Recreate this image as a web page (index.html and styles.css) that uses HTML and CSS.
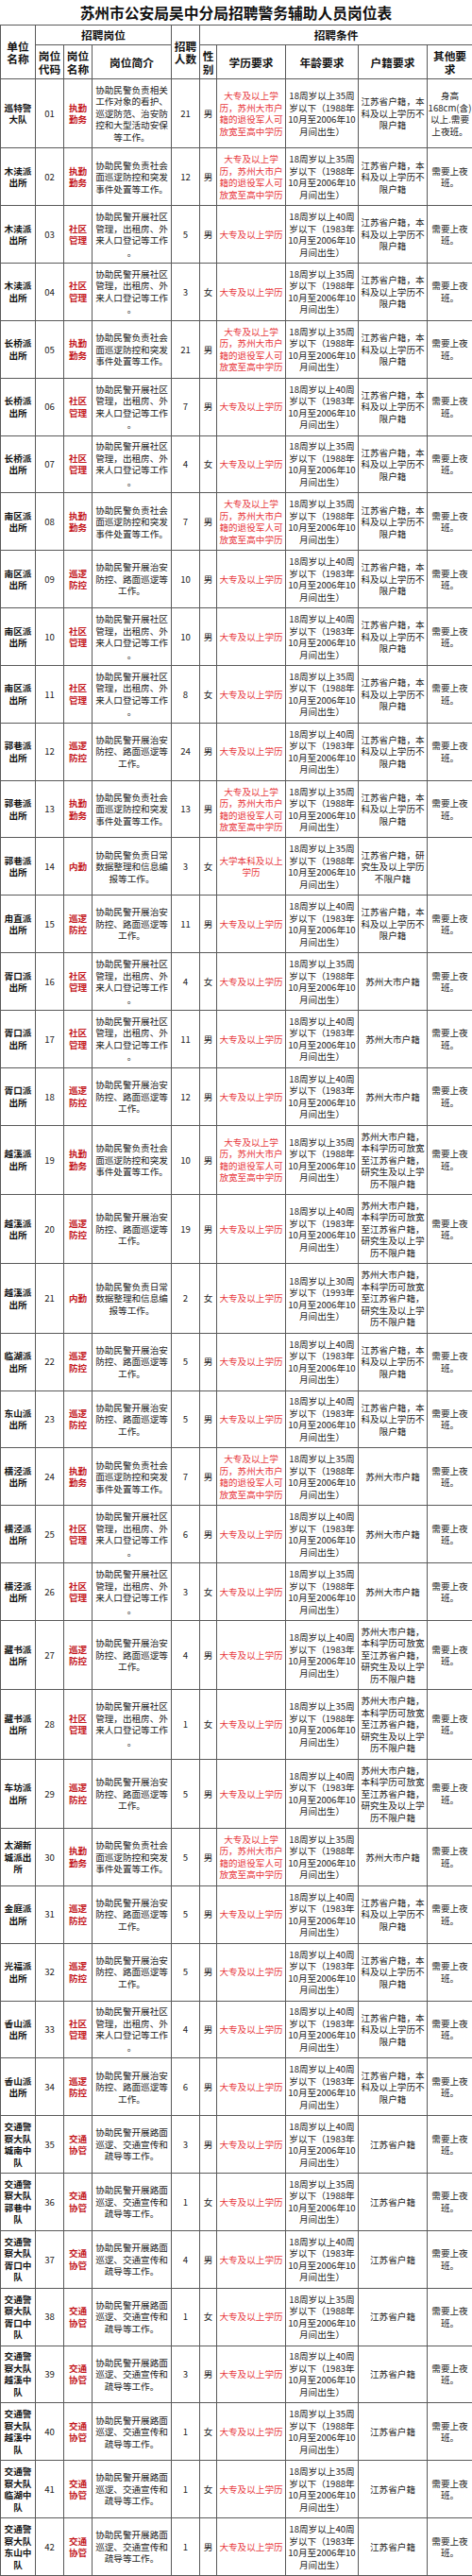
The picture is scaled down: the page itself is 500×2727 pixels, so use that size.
FILE: index.html
```
<!DOCTYPE html>
<html lang="zh-CN">
<head>
<meta charset="utf-8">
<title>苏州市公安局吴中分局招聘警务辅助人员岗位表</title>
<link rel="stylesheet" href="styles.css">
</head>
<body>
<div class="page">
<div class="title">苏州市公安局吴中分局招聘警务辅助人员岗位表</div>
<table class="jobs">
<colgroup>
<col class="c-unit"><col class="c-code"><col class="c-name"><col class="c-desc"><col class="c-num"><col class="c-sex"><col class="c-edu"><col class="c-age"><col class="c-hj"><col class="c-other">
</colgroup>
<thead>
<tr class="hr1">
<th rowspan="2">单位<br>名称</th>
<th colspan="3">招聘岗位</th>
<th rowspan="2">招聘<br>人数</th>
<th colspan="5">招聘条件</th>
</tr>
<tr class="hr2">
<th>岗位<br>代码</th><th>岗位<br>名称</th><th>岗位简介</th>
<th>性<br>别</th><th>学历要求</th><th>年龄要求</th><th>户籍要求</th><th>其他要<br>求</th>
</tr>
</thead>
<tbody>
<tr><td class="unit">巡特警<br>大队</td><td>01</td><td class="pos">执勤<br>勤务</td><td>协助民警负责相关<br>工作对象的看护、<br>巡逻防范、治安防<br>控和大型活动安保<br>等工作。</td><td>21</td><td>男</td><td class="edu">大专及以上学<br>历，苏州大市户<br>籍的退役军人可<br>放宽至高中学历</td><td>18周岁以上35周<br>岁以下（1988年<br>10月至2006年10<br>月间出生）</td><td>江苏省户籍，本<br>科及以上学历不<br>限户籍</td><td>身高<br>168cm(含)<br>以上.需要<br>上夜班。</td></tr>
<tr><td class="unit">木渎派<br>出所</td><td>02</td><td class="pos">执勤<br>勤务</td><td>协助民警负责社会<br>面巡逻防控和突发<br>事件处置等工作。</td><td>12</td><td>男</td><td class="edu">大专及以上学<br>历，苏州大市户<br>籍的退役军人可<br>放宽至高中学历</td><td>18周岁以上35周<br>岁以下（1988年<br>10月至2006年10<br>月间出生）</td><td>江苏省户籍，本<br>科及以上学历不<br>限户籍</td><td>需要上夜<br>班。</td></tr>
<tr><td class="unit">木渎派<br>出所</td><td>03</td><td class="pos">社区<br>管理</td><td>协助民警开展社区<br>管理，出租房、外<br>来人口登记等工作<br>。</td><td>5</td><td>男</td><td class="edu">大专及以上学历</td><td>18周岁以上40周<br>岁以下（1983年<br>10月至2006年10<br>月间出生）</td><td>江苏省户籍，本<br>科及以上学历不<br>限户籍</td><td>需要上夜<br>班。</td></tr>
<tr><td class="unit">木渎派<br>出所</td><td>04</td><td class="pos">社区<br>管理</td><td>协助民警开展社区<br>管理，出租房、外<br>来人口登记等工作<br>。</td><td>3</td><td>女</td><td class="edu">大专及以上学历</td><td>18周岁以上35周<br>岁以下（1988年<br>10月至2006年10<br>月间出生）</td><td>江苏省户籍，本<br>科及以上学历不<br>限户籍</td><td>需要上夜<br>班。</td></tr>
<tr><td class="unit">长桥派<br>出所</td><td>05</td><td class="pos">执勤<br>勤务</td><td>协助民警负责社会<br>面巡逻防控和突发<br>事件处置等工作。</td><td>21</td><td>男</td><td class="edu">大专及以上学<br>历，苏州大市户<br>籍的退役军人可<br>放宽至高中学历</td><td>18周岁以上35周<br>岁以下（1988年<br>10月至2006年10<br>月间出生）</td><td>江苏省户籍，本<br>科及以上学历不<br>限户籍</td><td>需要上夜<br>班。</td></tr>
<tr><td class="unit">长桥派<br>出所</td><td>06</td><td class="pos">社区<br>管理</td><td>协助民警开展社区<br>管理，出租房、外<br>来人口登记等工作<br>。</td><td>7</td><td>男</td><td class="edu">大专及以上学历</td><td>18周岁以上40周<br>岁以下（1983年<br>10月至2006年10<br>月间出生）</td><td>江苏省户籍，本<br>科及以上学历不<br>限户籍</td><td>需要上夜<br>班。</td></tr>
<tr><td class="unit">长桥派<br>出所</td><td>07</td><td class="pos">社区<br>管理</td><td>协助民警开展社区<br>管理，出租房、外<br>来人口登记等工作<br>。</td><td>4</td><td>女</td><td class="edu">大专及以上学历</td><td>18周岁以上35周<br>岁以下（1988年<br>10月至2006年10<br>月间出生）</td><td>江苏省户籍，本<br>科及以上学历不<br>限户籍</td><td>需要上夜<br>班。</td></tr>
<tr><td class="unit">南区派<br>出所</td><td>08</td><td class="pos">执勤<br>勤务</td><td>协助民警负责社会<br>面巡逻防控和突发<br>事件处置等工作。</td><td>7</td><td>男</td><td class="edu">大专及以上学<br>历，苏州大市户<br>籍的退役军人可<br>放宽至高中学历</td><td>18周岁以上35周<br>岁以下（1988年<br>10月至2006年10<br>月间出生）</td><td>江苏省户籍，本<br>科及以上学历不<br>限户籍</td><td>需要上夜<br>班。</td></tr>
<tr><td class="unit">南区派<br>出所</td><td>09</td><td class="pos">巡逻<br>防控</td><td>协助民警开展治安<br>防控、路面巡逻等<br>工作。</td><td>10</td><td>男</td><td class="edu">大专及以上学历</td><td>18周岁以上40周<br>岁以下（1983年<br>10月至2006年10<br>月间出生）</td><td>江苏省户籍，本<br>科及以上学历不<br>限户籍</td><td>需要上夜<br>班。</td></tr>
<tr><td class="unit">南区派<br>出所</td><td>10</td><td class="pos">社区<br>管理</td><td>协助民警开展社区<br>管理，出租房、外<br>来人口登记等工作<br>。</td><td>10</td><td>男</td><td class="edu">大专及以上学历</td><td>18周岁以上40周<br>岁以下（1983年<br>10月至2006年10<br>月间出生）</td><td>江苏省户籍，本<br>科及以上学历不<br>限户籍</td><td>需要上夜<br>班。</td></tr>
<tr><td class="unit">南区派<br>出所</td><td>11</td><td class="pos">社区<br>管理</td><td>协助民警开展社区<br>管理，出租房、外<br>来人口登记等工作<br>。</td><td>8</td><td>女</td><td class="edu">大专及以上学历</td><td>18周岁以上35周<br>岁以下（1988年<br>10月至2006年10<br>月间出生）</td><td>江苏省户籍，本<br>科及以上学历不<br>限户籍</td><td>需要上夜<br>班。</td></tr>
<tr><td class="unit">郭巷派<br>出所</td><td>12</td><td class="pos">巡逻<br>防控</td><td>协助民警开展治安<br>防控、路面巡逻等<br>工作。</td><td>24</td><td>男</td><td class="edu">大专及以上学历</td><td>18周岁以上40周<br>岁以下（1983年<br>10月至2006年10<br>月间出生）</td><td>江苏省户籍，本<br>科及以上学历不<br>限户籍</td><td>需要上夜<br>班。</td></tr>
<tr><td class="unit">郭巷派<br>出所</td><td>13</td><td class="pos">执勤<br>勤务</td><td>协助民警负责社会<br>面巡逻防控和突发<br>事件处置等工作。</td><td>13</td><td>男</td><td class="edu">大专及以上学<br>历，苏州大市户<br>籍的退役军人可<br>放宽至高中学历</td><td>18周岁以上35周<br>岁以下（1988年<br>10月至2006年10<br>月间出生）</td><td>江苏省户籍，本<br>科及以上学历不<br>限户籍</td><td>需要上夜<br>班。</td></tr>
<tr><td class="unit">郭巷派<br>出所</td><td>14</td><td class="pos">内勤</td><td>协助民警负责日常<br>数据整理和信息编<br>报等工作。</td><td>3</td><td>女</td><td class="edu">大学本科及以上<br>学历</td><td>18周岁以上35周<br>岁以下（1988年<br>10月至2006年10<br>月间出生）</td><td>江苏省户籍，研<br>究生及以上学历<br>不限户籍</td><td></td></tr>
<tr><td class="unit">甪直派<br>出所</td><td>15</td><td class="pos">巡逻<br>防控</td><td>协助民警开展治安<br>防控、路面巡逻等<br>工作。</td><td>11</td><td>男</td><td class="edu">大专及以上学历</td><td>18周岁以上40周<br>岁以下（1983年<br>10月至2006年10<br>月间出生）</td><td>江苏省户籍，本<br>科及以上学历不<br>限户籍</td><td>需要上夜<br>班。</td></tr>
<tr><td class="unit">胥口派<br>出所</td><td>16</td><td class="pos">社区<br>管理</td><td>协助民警开展社区<br>管理，出租房、外<br>来人口登记等工作<br>。</td><td>4</td><td>女</td><td class="edu">大专及以上学历</td><td>18周岁以上35周<br>岁以下（1988年<br>10月至2006年10<br>月间出生）</td><td>苏州大市户籍</td><td>需要上夜<br>班。</td></tr>
<tr><td class="unit">胥口派<br>出所</td><td>17</td><td class="pos">社区<br>管理</td><td>协助民警开展社区<br>管理，出租房、外<br>来人口登记等工作<br>。</td><td>11</td><td>男</td><td class="edu">大专及以上学历</td><td>18周岁以上40周<br>岁以下（1983年<br>10月至2006年10<br>月间出生）</td><td>苏州大市户籍</td><td>需要上夜<br>班。</td></tr>
<tr><td class="unit">胥口派<br>出所</td><td>18</td><td class="pos">巡逻<br>防控</td><td>协助民警开展治安<br>防控、路面巡逻等<br>工作。</td><td>12</td><td>男</td><td class="edu">大专及以上学历</td><td>18周岁以上40周<br>岁以下（1983年<br>10月至2006年10<br>月间出生）</td><td>苏州大市户籍</td><td>需要上夜<br>班。</td></tr>
<tr><td class="unit">越溪派<br>出所</td><td>19</td><td class="pos">执勤<br>勤务</td><td>协助民警负责社会<br>面巡逻防控和突发<br>事件处置等工作。</td><td>10</td><td>男</td><td class="edu">大专及以上学<br>历，苏州大市户<br>籍的退役军人可<br>放宽至高中学历</td><td>18周岁以上35周<br>岁以下（1988年<br>10月至2006年10<br>月间出生）</td><td>苏州大市户籍，<br>本科学历可放宽<br>至江苏省户籍，<br>研究生及以上学<br>历不限户籍</td><td>需要上夜<br>班。</td></tr>
<tr><td class="unit">越溪派<br>出所</td><td>20</td><td class="pos">巡逻<br>防控</td><td>协助民警开展治安<br>防控、路面巡逻等<br>工作。</td><td>19</td><td>男</td><td class="edu">大专及以上学历</td><td>18周岁以上40周<br>岁以下（1983年<br>10月至2006年10<br>月间出生）</td><td>苏州大市户籍，<br>本科学历可放宽<br>至江苏省户籍，<br>研究生及以上学<br>历不限户籍</td><td>需要上夜<br>班。</td></tr>
<tr><td class="unit">越溪派<br>出所</td><td>21</td><td class="pos">内勤</td><td>协助民警负责日常<br>数据整理和信息编<br>报等工作。</td><td>2</td><td>女</td><td class="edu">大专及以上学历</td><td>18周岁以上30周<br>岁以下（1993年<br>10月至2006年10<br>月间出生）</td><td>苏州大市户籍，<br>本科学历可放宽<br>至江苏省户籍，<br>研究生及以上学<br>历不限户籍</td><td></td></tr>
<tr><td class="unit">临湖派<br>出所</td><td>22</td><td class="pos">巡逻<br>防控</td><td>协助民警开展治安<br>防控、路面巡逻等<br>工作。</td><td>5</td><td>男</td><td class="edu">大专及以上学历</td><td>18周岁以上40周<br>岁以下（1983年<br>10月至2006年10<br>月间出生）</td><td>江苏省户籍，本<br>科及以上学历不<br>限户籍</td><td>需要上夜<br>班。</td></tr>
<tr><td class="unit">东山派<br>出所</td><td>23</td><td class="pos">巡逻<br>防控</td><td>协助民警开展治安<br>防控、路面巡逻等<br>工作。</td><td>5</td><td>男</td><td class="edu">大专及以上学历</td><td>18周岁以上40周<br>岁以下（1983年<br>10月至2006年10<br>月间出生）</td><td>江苏省户籍，本<br>科及以上学历不<br>限户籍</td><td>需要上夜<br>班。</td></tr>
<tr><td class="unit">横泾派<br>出所</td><td>24</td><td class="pos">执勤<br>勤务</td><td>协助民警负责社会<br>面巡逻防控和突发<br>事件处置等工作。</td><td>7</td><td>男</td><td class="edu">大专及以上学<br>历，苏州大市户<br>籍的退役军人可<br>放宽至高中学历</td><td>18周岁以上35周<br>岁以下（1988年<br>10月至2006年10<br>月间出生）</td><td>苏州大市户籍</td><td>需要上夜<br>班。</td></tr>
<tr><td class="unit">横泾派<br>出所</td><td>25</td><td class="pos">社区<br>管理</td><td>协助民警开展社区<br>管理，出租房、外<br>来人口登记等工作<br>。</td><td>6</td><td>男</td><td class="edu">大专及以上学历</td><td>18周岁以上40周<br>岁以下（1983年<br>10月至2006年10<br>月间出生）</td><td>苏州大市户籍</td><td>需要上夜<br>班。</td></tr>
<tr><td class="unit">横泾派<br>出所</td><td>26</td><td class="pos">社区<br>管理</td><td>协助民警开展社区<br>管理，出租房、外<br>来人口登记等工作<br>。</td><td>3</td><td>女</td><td class="edu">大专及以上学历</td><td>18周岁以上35周<br>岁以下（1988年<br>10月至2006年10<br>月间出生）</td><td>苏州大市户籍</td><td>需要上夜<br>班。</td></tr>
<tr><td class="unit">藏书派<br>出所</td><td>27</td><td class="pos">巡逻<br>防控</td><td>协助民警开展治安<br>防控、路面巡逻等<br>工作。</td><td>4</td><td>男</td><td class="edu">大专及以上学历</td><td>18周岁以上40周<br>岁以下（1983年<br>10月至2006年10<br>月间出生）</td><td>苏州大市户籍，<br>本科学历可放宽<br>至江苏省户籍，<br>研究生及以上学<br>历不限户籍</td><td>需要上夜<br>班。</td></tr>
<tr><td class="unit">藏书派<br>出所</td><td>28</td><td class="pos">社区<br>管理</td><td>协助民警开展社区<br>管理，出租房、外<br>来人口登记等工作<br>。</td><td>1</td><td>女</td><td class="edu">大专及以上学历</td><td>18周岁以上35周<br>岁以下（1988年<br>10月至2006年10<br>月间出生）</td><td>苏州大市户籍，<br>本科学历可放宽<br>至江苏省户籍，<br>研究生及以上学<br>历不限户籍</td><td>需要上夜<br>班。</td></tr>
<tr><td class="unit">车坊派<br>出所</td><td>29</td><td class="pos">巡逻<br>防控</td><td>协助民警开展治安<br>防控、路面巡逻等<br>工作。</td><td>5</td><td>男</td><td class="edu">大专及以上学历</td><td>18周岁以上40周<br>岁以下（1983年<br>10月至2006年10<br>月间出生）</td><td>苏州大市户籍，<br>本科学历可放宽<br>至江苏省户籍，<br>研究生及以上学<br>历不限户籍</td><td>需要上夜<br>班。</td></tr>
<tr><td class="unit">太湖新<br>城派出<br>所</td><td>30</td><td class="pos">执勤<br>勤务</td><td>协助民警负责社会<br>面巡逻防控和突发<br>事件处置等工作。</td><td>5</td><td>男</td><td class="edu">大专及以上学<br>历，苏州大市户<br>籍的退役军人可<br>放宽至高中学历</td><td>18周岁以上35周<br>岁以下（1988年<br>10月至2006年10<br>月间出生）</td><td>苏州大市户籍</td><td>需要上夜<br>班。</td></tr>
<tr><td class="unit">金庭派<br>出所</td><td>31</td><td class="pos">巡逻<br>防控</td><td>协助民警开展治安<br>防控、路面巡逻等<br>工作。</td><td>5</td><td>男</td><td class="edu">大专及以上学历</td><td>18周岁以上40周<br>岁以下（1983年<br>10月至2006年10<br>月间出生）</td><td>江苏省户籍，本<br>科及以上学历不<br>限户籍</td><td>需要上夜<br>班。</td></tr>
<tr><td class="unit">光福派<br>出所</td><td>32</td><td class="pos">巡逻<br>防控</td><td>协助民警开展治安<br>防控、路面巡逻等<br>工作。</td><td>5</td><td>男</td><td class="edu">大专及以上学历</td><td>18周岁以上40周<br>岁以下（1983年<br>10月至2006年10<br>月间出生）</td><td>江苏省户籍，本<br>科及以上学历不<br>限户籍</td><td>需要上夜<br>班。</td></tr>
<tr><td class="unit">香山派<br>出所</td><td>33</td><td class="pos">社区<br>管理</td><td>协助民警开展社区<br>管理，出租房、外<br>来人口登记等工作<br>。</td><td>4</td><td>男</td><td class="edu">大专及以上学历</td><td>18周岁以上40周<br>岁以下（1983年<br>10月至2006年10<br>月间出生）</td><td>江苏省户籍，本<br>科及以上学历不<br>限户籍</td><td>需要上夜<br>班。</td></tr>
<tr><td class="unit">香山派<br>出所</td><td>34</td><td class="pos">巡逻<br>防控</td><td>协助民警开展治安<br>防控、路面巡逻等<br>工作。</td><td>6</td><td>男</td><td class="edu">大专及以上学历</td><td>18周岁以上40周<br>岁以下（1983年<br>10月至2006年10<br>月间出生）</td><td>江苏省户籍，本<br>科及以上学历不<br>限户籍</td><td>需要上夜<br>班。</td></tr>
<tr><td class="unit">交通警<br>察大队<br>城南中<br>队</td><td>35</td><td class="pos">交通<br>协管</td><td>协助民警开展路面<br>巡逻、交通宣传和<br>疏导等工作。</td><td>3</td><td>男</td><td class="edu">大专及以上学历</td><td>18周岁以上40周<br>岁以下（1983年<br>10月至2006年10<br>月间出生）</td><td>江苏省户籍</td><td>需要上夜<br>班。</td></tr>
<tr><td class="unit">交通警<br>察大队<br>郭巷中<br>队</td><td>36</td><td class="pos">交通<br>协管</td><td>协助民警开展路面<br>巡逻、交通宣传和<br>疏导等工作。</td><td>1</td><td>女</td><td class="edu">大专及以上学历</td><td>18周岁以上35周<br>岁以下（1988年<br>10月至2006年10<br>月间出生）</td><td>江苏省户籍</td><td>需要上夜<br>班。</td></tr>
<tr><td class="unit">交通警<br>察大队<br>胥口中<br>队</td><td>37</td><td class="pos">交通<br>协管</td><td>协助民警开展路面<br>巡逻、交通宣传和<br>疏导等工作。</td><td>4</td><td>男</td><td class="edu">大专及以上学历</td><td>18周岁以上40周<br>岁以下（1983年<br>10月至2006年10<br>月间出生）</td><td>江苏省户籍</td><td>需要上夜<br>班。</td></tr>
<tr><td class="unit">交通警<br>察大队<br>胥口中<br>队</td><td>38</td><td class="pos">交通<br>协管</td><td>协助民警开展路面<br>巡逻、交通宣传和<br>疏导等工作。</td><td>1</td><td>女</td><td class="edu">大专及以上学历</td><td>18周岁以上35周<br>岁以下（1988年<br>10月至2006年10<br>月间出生）</td><td>江苏省户籍</td><td>需要上夜<br>班。</td></tr>
<tr><td class="unit">交通警<br>察大队<br>越溪中<br>队</td><td>39</td><td class="pos">交通<br>协管</td><td>协助民警开展路面<br>巡逻、交通宣传和<br>疏导等工作。</td><td>3</td><td>男</td><td class="edu">大专及以上学历</td><td>18周岁以上40周<br>岁以下（1983年<br>10月至2006年10<br>月间出生）</td><td>江苏省户籍</td><td>需要上夜<br>班。</td></tr>
<tr><td class="unit">交通警<br>察大队<br>越溪中<br>队</td><td>40</td><td class="pos">交通<br>协管</td><td>协助民警开展路面<br>巡逻、交通宣传和<br>疏导等工作。</td><td>1</td><td>女</td><td class="edu">大专及以上学历</td><td>18周岁以上35周<br>岁以下（1988年<br>10月至2006年10<br>月间出生）</td><td>江苏省户籍</td><td>需要上夜<br>班。</td></tr>
<tr><td class="unit">交通警<br>察大队<br>临湖中<br>队</td><td>41</td><td class="pos">交通<br>协管</td><td>协助民警开展路面<br>巡逻、交通宣传和<br>疏导等工作。</td><td>1</td><td>女</td><td class="edu">大专及以上学历</td><td>18周岁以上35周<br>岁以下（1988年<br>10月至2006年10<br>月间出生）</td><td>江苏省户籍</td><td>需要上夜<br>班。</td></tr>
<tr><td class="unit">交通警<br>察大队<br>东山中<br>队</td><td>42</td><td class="pos">交通<br>协管</td><td>协助民警开展路面<br>巡逻、交通宣传和<br>疏导等工作。</td><td>1</td><td>男</td><td class="edu">大专及以上学历</td><td>18周岁以上40周<br>岁以下（1983年<br>10月至2006年10<br>月间出生）</td><td>江苏省户籍</td><td>需要上夜<br>班。</td></tr>
</tbody>
</table>
</div>
</body>
</html>
```

FILE: styles.css
```
html, body {
  margin: 0;
  padding: 0;
  background: #fff;
}

body {
  font-family: "Noto Sans CJK SC", "Noto Sans", sans-serif;
  color: #222;
}

.page {
  width: 500px;
}

.title {
  height: 26px;
  line-height: 28px;
  text-align: center;
  font-size: 15.75px;
  font-weight: 700;
  color: #111;
  white-space: nowrap;
}

.jobs {
  width: 500px;
  border-collapse: collapse;
  table-layout: fixed;
}

.c-unit { width: 37px; }
.c-code { width: 30px; }
.c-name { width: 30px; }
.c-desc { width: 84px; }
.c-num { width: 30px; }
.c-sex { width: 18px; }
.c-edu { width: 73px; }
.c-age { width: 77px; }
.c-hj { width: 73px; }
.c-other { width: 48px; }

.jobs th,
.jobs td {
  border: 1px solid #5a5a5a;
  text-align: center;
  vertical-align: middle;
  white-space: nowrap;
  overflow: hidden;
}

.jobs th {
  font-size: 11.7px;
  line-height: 13.5px;
  font-weight: 700;
  color: #111;
  padding: 0;
}

.hr1 { height: 21px; }
.hr2 { height: 36px; }

.jobs td {
  font-size: 9.6px;
  line-height: 12.5px;
  padding: 4.93px 0;
}

.jobs td.unit {
  font-weight: 700;
  color: #111;
}

.jobs td.pos {
  font-weight: 700;
  color: #c4161c;
}

.jobs td.edu {
  color: #e8383d;
}
```
